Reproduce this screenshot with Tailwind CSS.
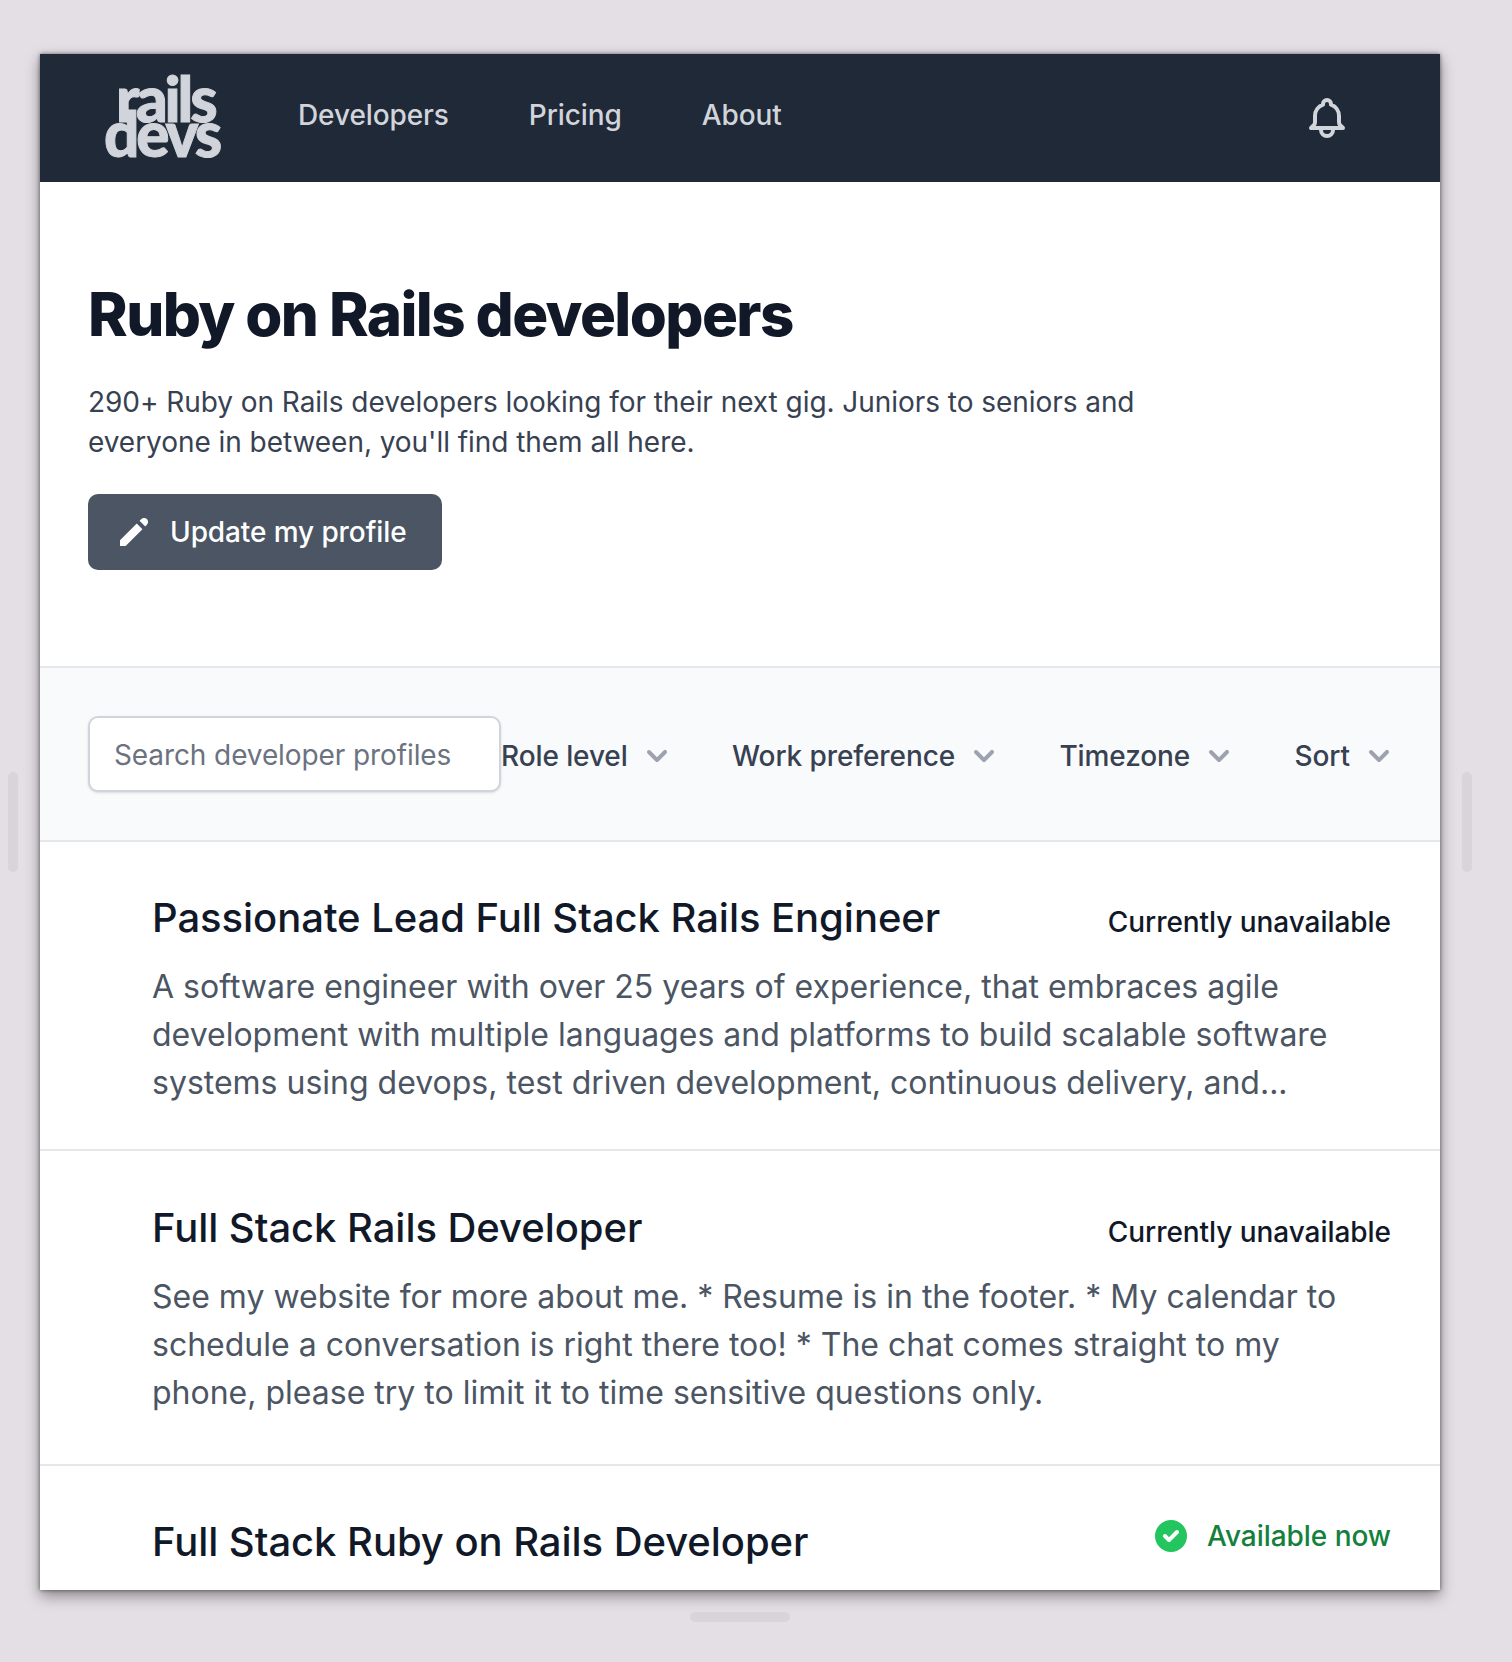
<!DOCTYPE html>
<html lang="en">
<head>
    <meta charset="UTF-8">
    <title>Ruby on Rails developers</title>
    <script src="https://cdn.jsdelivr.net/npm/@tailwindcss/browser@4"></script>
</head>
<body class="relative h-[1662px] w-[1512px] overflow-hidden bg-[#e4dfe5] pl-[40px] pt-[54px] font-['Inter',sans-serif]">
    <!-- Resize handles around the window -->
    <div class="absolute left-[8px] top-[772px] h-[100px] w-[10px] rounded-full bg-[#d9d4da]"></div>
    <div class="absolute left-[1462px] top-[772px] h-[100px] w-[10px] rounded-full bg-[#d9d4da]"></div>
    <div class="absolute left-[690px] top-[1612px] h-[10px] w-[100px] rounded-full bg-[#d9d4da]"></div>

    <div class="h-[1536px] w-[1400px] overflow-hidden bg-white shadow-[0_6px_14px_rgba(0,0,0,0.4),0_0_4px_rgba(0,0,0,0.5)]">
        <!-- Nav -->
        <nav class="flex h-[128px] items-center bg-[#1f2937] pl-[64px] pr-[89px]">
            <div class="w-[194px] -translate-y-[2px] font-['Lato',sans-serif] text-[62px] leading-[35px] font-black tracking-[-0.05em] text-[#d1d5db] [-webkit-text-stroke:1px_#d1d5db]">
                <div class="pl-[12px]">rails</div>
                <div>devs</div>
            </div>
            <div class="flex -translate-y-[3px] gap-[80px] text-[28px] font-medium tracking-[-0.1px] text-[#d1d5db]">
                <a href="#">Developers</a>
                <a href="#">Pricing</a>
                <a href="#">About</a>
            </div>
            <svg class="ml-auto h-[48px] w-[48px] text-[#d1d5db]" fill="none" stroke="currentColor" viewBox="0 0 24 24">
                <path stroke-linecap="round" stroke-linejoin="round" stroke-width="2" d="M15 17h5l-1.405-1.405A2.032 2.032 0 0118 14.158V11a6.002 6.002 0 00-4-5.659V5a2 2 0 10-4 0v.341C7.67 6.165 6 8.388 6 11v3.159c0 .538-.214 1.055-.595 1.436L4 17h5m6 0v1a3 3 0 11-6 0v-1m6 0H9"></path>
            </svg>
        </nav>

        <!-- Hero -->
        <header class="h-[484px] px-[48px] pt-[97px]">
            <h1 class="text-[60px] leading-[70px] font-extrabold tracking-[-1.6px] text-[#111827]">Ruby on Rails developers</h1>
            <p class="mt-[33px] max-w-[1120px] text-[28px] leading-[40px] tracking-[-0.05px] text-[#374151]">290+ Ruby on Rails developers looking for their next gig. Juniors to seniors and everyone in between, you'll find them all here.</p>
            <a href="#" class="mt-[32px] inline-flex h-[76px] w-[354px] items-center rounded-[10px] bg-[#4b5563] pl-[26px] text-[28px] font-medium tracking-[-0.1px] text-white">
                <svg class="mr-[16px] h-[40px] w-[40px]" fill="currentColor" viewBox="0 0 20 20">
                    <path d="M13.586 3.586a2 2 0 112.828 2.828l-.793.793-2.828-2.828.793-.793zM11.379 5.793L3 14.172V17h2.828l8.38-8.379-2.83-2.828z"></path>
                </svg>
                Update my profile
            </a>
        </header>

        <!-- Filters -->
        <div class="flex h-[176px] items-center border-y-2 border-[#e5e7eb] bg-[#f9fafb] pl-[48px] pr-[41px]">
            <input placeholder="Search developer profiles" class="h-[76px] w-[413px] rounded-[10px] border-2 border-[#d1d5db] bg-white px-[24px] pt-[2px] text-[28px] tracking-[-0.1px] text-[#374151] shadow-sm placeholder:text-[#6b7280]">
            <div class="flex flex-1 translate-y-[2px] justify-between text-[28px] font-medium tracking-[-0.1px] text-[#374151]">
                <button class="flex items-center gap-[9px]">Role level
                    <svg class="h-[40px] w-[40px] text-[#9ca3af]" fill="currentColor" viewBox="0 0 20 20"><path fill-rule="evenodd" clip-rule="evenodd" d="M5.293 7.293a1 1 0 011.414 0L10 10.586l3.293-3.293a1 1 0 111.414 1.414l-4 4a1 1 0 01-1.414 0l-4-4a1 1 0 010-1.414z"></path></svg>
                </button>
                <button class="flex items-center gap-[9px]">Work preference
                    <svg class="h-[40px] w-[40px] text-[#9ca3af]" fill="currentColor" viewBox="0 0 20 20"><path fill-rule="evenodd" clip-rule="evenodd" d="M5.293 7.293a1 1 0 011.414 0L10 10.586l3.293-3.293a1 1 0 111.414 1.414l-4 4a1 1 0 01-1.414 0l-4-4a1 1 0 010-1.414z"></path></svg>
                </button>
                <button class="flex items-center gap-[9px]">Timezone
                    <svg class="h-[40px] w-[40px] text-[#9ca3af]" fill="currentColor" viewBox="0 0 20 20"><path fill-rule="evenodd" clip-rule="evenodd" d="M5.293 7.293a1 1 0 011.414 0L10 10.586l3.293-3.293a1 1 0 111.414 1.414l-4 4a1 1 0 01-1.414 0l-4-4a1 1 0 010-1.414z"></path></svg>
                </button>
                <button class="flex items-center gap-[9px]">Sort
                    <svg class="h-[40px] w-[40px] text-[#9ca3af]" fill="currentColor" viewBox="0 0 20 20"><path fill-rule="evenodd" clip-rule="evenodd" d="M5.293 7.293a1 1 0 011.414 0L10 10.586l3.293-3.293a1 1 0 111.414 1.414l-4 4a1 1 0 01-1.414 0l-4-4a1 1 0 010-1.414z"></path></svg>
                </button>
            </div>
        </div>

        <!-- Developers -->
        <article class="h-[309px] border-b-2 border-[#e5e7eb] pl-[112px] pr-[49px] pt-[48px]">
            <div class="flex items-center justify-between">
                <h2 class="text-[40px] leading-[56px] font-medium tracking-[-0.05px] text-[#111827]">Passionate Lead Full Stack Rails Engineer</h2>
                <span class="translate-y-[4px] text-[28px] font-medium tracking-[-0.05px] text-[#111827]">Currently unavailable</span>
            </div>
            <p class="mt-[17px] text-[32px] leading-[48px] text-[#4b5563]">A software engineer with over 25 years of experience, that embraces agile development with multiple languages and platforms to build scalable software systems using devops, test driven development, continuous delivery, and...</p>
        </article>
        <article class="h-[315px] border-b-2 border-[#e5e7eb] pl-[112px] pr-[49px] pt-[49px]">
            <div class="flex items-center justify-between">
                <h2 class="text-[40px] leading-[56px] font-medium tracking-[-0.05px] text-[#111827]">Full Stack Rails Developer</h2>
                <span class="translate-y-[4px] text-[28px] font-medium tracking-[-0.05px] text-[#111827]">Currently unavailable</span>
            </div>
            <p class="mt-[17px] text-[32px] leading-[48px] text-[#4b5563]">See my website for more about me. * Resume is in the footer. * My calendar to schedule a conversation is right there too! * The chat comes straight to my phone, please try to limit it to time sensitive questions only.</p>
        </article>
        <article class="pl-[112px] pr-[49px] pt-[48px]">
            <div class="flex items-center justify-between">
                <h2 class="text-[40px] leading-[56px] font-medium tracking-[-0.05px] text-[#111827]">Full Stack Ruby on Rails Developer</h2>
                <span class="flex -translate-y-[6px] items-center gap-[16px] text-[28px] font-medium tracking-[-0.05px] text-[#15803d]">
                    <svg class="h-[40px] w-[40px] text-[#22c55e]" fill="currentColor" viewBox="0 0 20 20"><path fill-rule="evenodd" clip-rule="evenodd" d="M10 18a8 8 0 100-16 8 8 0 000 16zm3.707-9.293a1 1 0 00-1.414-1.414L9 10.586 7.707 9.293a1 1 0 00-1.414 1.414l2 2a1 1 0 001.414 0l4-4z"></path></svg>
                    Available now
                </span>
            </div>
        </article>
    </div>
</body>
</html>
